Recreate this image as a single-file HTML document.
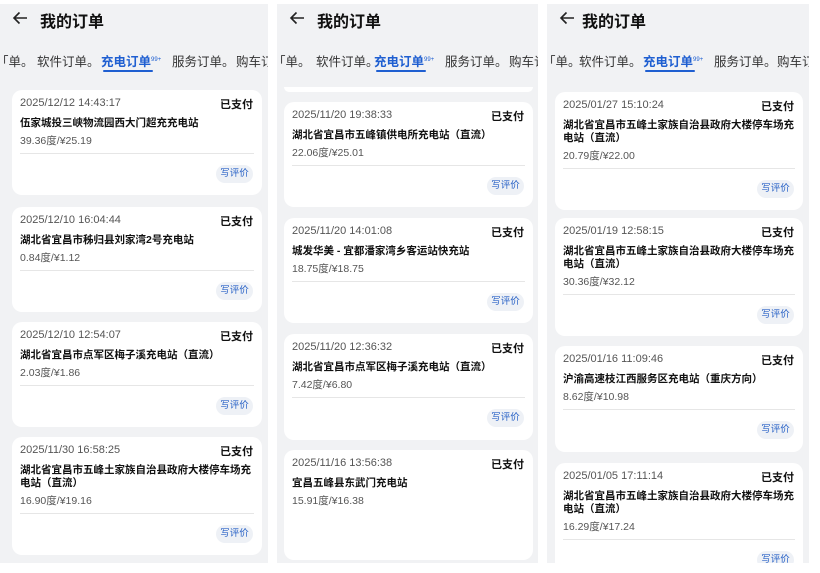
<!DOCTYPE html>
<html><head><meta charset="utf-8"><style>
*{margin:0;padding:0;box-sizing:border-box}
body{width:820px;height:573px;background:#fff;position:relative;overflow:hidden;font-family:"Liberation Sans","Noto Sans CJK SC",sans-serif}
.p{position:absolute;top:4px;height:559px;background:#f1f2f4;overflow:hidden}
.hd{position:absolute;top:4px;left:0;font-size:16px;font-weight:bold;color:#111;white-space:nowrap}
.hd svg{position:absolute;top:3px;left:12px}
.hd span{position:absolute;left:40px;top:0}
.tabs{position:absolute;top:47px;left:0;font-size:12.5px;color:#333;white-space:nowrap}
.tabs span{position:absolute;top:0}
.tabs .a{color:#1f5fd1;font-weight:bold}
.tabs sup{font-size:6px;font-weight:normal}
.ul{position:absolute;top:66px;height:2px;width:50px;background:#1f5fd1;border-radius:1px}
.c{position:absolute;background:#fff;border-radius:10px}
.c .d{position:absolute;left:8px;top:7px;font-size:11px;color:#555}
.c .s{position:absolute;right:9px;top:6px;font-size:11px;color:#111;font-weight:bold}
.c .n{position:absolute;left:8px;top:27px;font-size:10.5px;color:#111;font-weight:bold;line-height:13px;right:3px}
.c .pr{position:absolute;left:8px;font-size:10.5px;color:#555}
.c .ln{position:absolute;left:8px;right:8px;height:1px;background:#e6e6e6}
.c .b{position:absolute;right:9px;width:37px;height:18px;border-radius:9px;background:#eef1f6;color:#2a63c7;font-size:9.5px;text-align:center;line-height:18px}
</style></head><body>

<!-- panel 1 -->
<div class="p" style="left:0;width:268px">
 <div class="hd"><svg width="16" height="14" viewBox="0 0 16 14"><path d="M15 7H2M7.5 1.5L2 7l5.5 5.5" fill="none" stroke="#222" stroke-width="1.6"/></svg><span>我的订单</span></div>
 <div class="tabs"><span style="left:-4px">「单。</span><span style="left:37px">软件订单。</span><span class="a" style="left:101px">充电订单<sup>99+</sup></span><span style="left:172px">服务订单。</span><span style="left:236px">购车订「</span></div>
 <div class="ul" style="left:103px"></div>
 <div class="c" style="left:12px;top:86px;width:250px;height:105px"><div class="d">2025/12/12 14:43:17</div><div class="s">已支付</div><div class="n">伍家城投三峡物流园西大门超充充电站</div><div class="pr" style="top:43px">39.36度/¥25.19</div><div class="ln" style="top:63px"></div><div class="b" style="top:75px">写评价</div></div>
 <div class="c" style="left:12px;top:203px;width:250px;height:105px"><div class="d">2025/12/10 16:04:44</div><div class="s">已支付</div><div class="n">湖北省宜昌市秭归县刘家湾2号充电站</div><div class="pr" style="top:43px">0.84度/¥1.12</div><div class="ln" style="top:63px"></div><div class="b" style="top:75px">写评价</div></div>
 <div class="c" style="left:12px;top:318px;width:250px;height:105px"><div class="d">2025/12/10 12:54:07</div><div class="s">已支付</div><div class="n">湖北省宜昌市点军区梅子溪充电站（直流）</div><div class="pr" style="top:43px">2.03度/¥1.86</div><div class="ln" style="top:63px"></div><div class="b" style="top:75px">写评价</div></div>
 <div class="c" style="left:12px;top:433px;width:250px;height:118px"><div class="d">2025/11/30 16:58:25</div><div class="s">已支付</div><div class="n">湖北省宜昌市五峰土家族自治县政府大楼停车场充电站（直流）</div><div class="pr" style="top:56px">16.90度/¥19.16</div><div class="ln" style="top:76px"></div><div class="b" style="top:88px">写评价</div></div>
</div>

<!-- panel 2 -->
<div class="p" style="left:277px;width:261px">
 <div class="hd"><svg width="16" height="14" viewBox="0 0 16 14"><path d="M15 7H2M7.5 1.5L2 7l5.5 5.5" fill="none" stroke="#222" stroke-width="1.6"/></svg><span>我的订单</span></div>
 <div class="tabs"><span style="left:-4px">「单。</span><span style="left:39px">软件订单。</span><span class="a" style="left:97px">充电订单<sup>99+</sup></span><span style="left:168px">服务订单。</span><span style="left:232px">购车订「</span></div>
 <div class="ul" style="left:99px"></div>
 <div class="c" style="left:7px;top:83px;width:249px;height:5px;border-radius:0 0 6px 6px"></div>
 <div class="c" style="left:7px;top:98px;width:249px;height:105px"><div class="d">2025/11/20 19:38:33</div><div class="s">已支付</div><div class="n">湖北省宜昌市五峰镇供电所充电站（直流）</div><div class="pr" style="top:43px">22.06度/¥25.01</div><div class="ln" style="top:63px"></div><div class="b" style="top:75px">写评价</div></div>
 <div class="c" style="left:7px;top:214px;width:249px;height:105px"><div class="d">2025/11/20 14:01:08</div><div class="s">已支付</div><div class="n">城发华美 - 宜都潘家湾乡客运站快充站</div><div class="pr" style="top:43px">18.75度/¥18.75</div><div class="ln" style="top:63px"></div><div class="b" style="top:75px">写评价</div></div>
 <div class="c" style="left:7px;top:330px;width:249px;height:106px"><div class="d">2025/11/20 12:36:32</div><div class="s">已支付</div><div class="n">湖北省宜昌市点军区梅子溪充电站（直流）</div><div class="pr" style="top:43px">7.42度/¥6.80</div><div class="ln" style="top:63px"></div><div class="b" style="top:75px">写评价</div></div>
 <div class="c" style="left:7px;top:446px;width:249px;height:110px"><div class="d">2025/11/16 13:56:38</div><div class="s">已支付</div><div class="n">宜昌五峰县东武门充电站</div><div class="pr" style="top:43px">15.91度/¥16.38</div></div>
</div>

<!-- panel 3 -->
<div class="p" style="left:547px;width:262px">
 <div class="hd"><svg width="16" height="14" viewBox="0 0 16 14"><path d="M15 7H2M7.5 1.5L2 7l5.5 5.5" fill="none" stroke="#222" stroke-width="1.6"/></svg><span style="left:35px">我的订单</span></div>
 <div class="tabs"><span style="left:-4px">「单。</span><span style="left:32px">软件订单。</span><span class="a" style="left:96px">充电订单<sup>99+</sup></span><span style="left:167px">服务订单。</span><span style="left:230px">购车订「</span></div>
 <div class="ul" style="left:98px"></div>
 <div class="c" style="left:8px;top:88px;width:248px;height:118px"><div class="d">2025/01/27 15:10:24</div><div class="s">已支付</div><div class="n">湖北省宜昌市五峰土家族自治县政府大楼停车场充电站（直流）</div><div class="pr" style="top:56px">20.79度/¥22.00</div><div class="ln" style="top:76px"></div><div class="b" style="top:88px">写评价</div></div>
 <div class="c" style="left:8px;top:214px;width:248px;height:118px"><div class="d">2025/01/19 12:58:15</div><div class="s">已支付</div><div class="n">湖北省宜昌市五峰土家族自治县政府大楼停车场充电站（直流）</div><div class="pr" style="top:56px">30.36度/¥32.12</div><div class="ln" style="top:76px"></div><div class="b" style="top:88px">写评价</div></div>
 <div class="c" style="left:8px;top:342px;width:248px;height:106px"><div class="d">2025/01/16 11:09:46</div><div class="s">已支付</div><div class="n">沪渝高速枝江西服务区充电站（重庆方向）</div><div class="pr" style="top:43px">8.62度/¥10.98</div><div class="ln" style="top:63px"></div><div class="b" style="top:75px">写评价</div></div>
 <div class="c" style="left:8px;top:459px;width:248px;height:118px"><div class="d">2025/01/05 17:11:14</div><div class="s">已支付</div><div class="n">湖北省宜昌市五峰土家族自治县政府大楼停车场充电站（直流）</div><div class="pr" style="top:56px">16.29度/¥17.24</div><div class="ln" style="top:76px"></div><div class="b" style="top:88px">写评价</div></div>
</div>
</body></html>
